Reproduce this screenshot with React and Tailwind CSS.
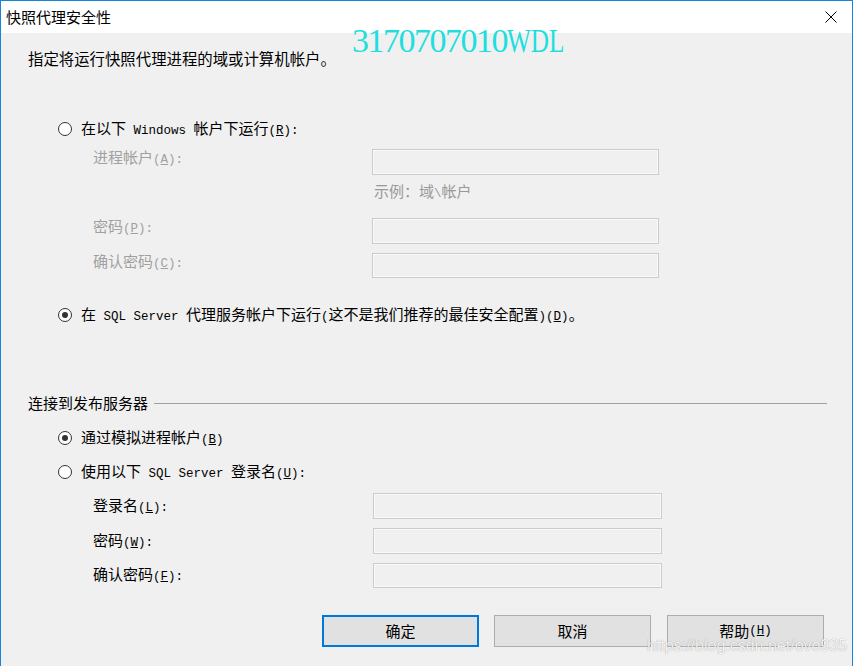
import React from 'react';

const M = ({ children }) => (
  <span className="font-['Liberation_Mono',monospace] text-[12.5px]">{children}</span>
);

function Radio({ checked }) {
  return (
    <span className="flex h-[14px] w-[14px] shrink-0 items-center justify-center rounded-full border border-[#333333] bg-white">
      {checked && <span className="h-[6px] w-[6px] rounded-full bg-[#333333]" />}
    </span>
  );
}

function RadioRow({ checked, className = '', children }) {
  return (
    <div className={`flex h-[24px] items-center ${className}`}>
      <div className="ml-[57px]">
        <Radio checked={checked} />
      </div>
      <span className="ml-[9px] whitespace-nowrap leading-[20px]">{children}</span>
    </div>
  );
}

const inputBox = 'border border-[#cccccc] bg-[#f0f0f0] shadow-[inset_0_0_0_1px_#f9f9f9]';

function DisabledField({ label, className = '', height = 'h-[26px]' }) {
  return (
    <div className={`flex ${height} items-start ${className}`}>
      <span className="ml-[92px] w-[279px] whitespace-nowrap leading-[16px] text-[#a0a0a0]">{label}</span>
      <div className={`h-full w-[287px] ${inputBox}`} />
    </div>
  );
}

function LoginField({ label, height = 'h-[26px]' }) {
  return (
    <div className={`mt-[9px] flex ${height} items-center`}>
      <span className="ml-[92px] w-[280px] whitespace-nowrap leading-[20px]">{label}</span>
      <div className={`h-full w-[289px] ${inputBox}`} />
    </div>
  );
}

export default function App() {
  return (
    <div className="relative h-[666px] w-[853px] overflow-hidden border-x border-t border-[#1883d7] bg-[#f0f0f0] font-['Noto_Sans_CJK_SC',sans-serif] text-[15px] text-black">
      {/* title bar */}
      <div className="flex h-[32px] items-center justify-between bg-white">
        <span className="ml-[5px] leading-[20px]">快照代理安全性</span>
        <svg className="mr-[15px] h-[12px] w-[12px]" viewBox="0 0 12 12" fill="none" stroke="#000" strokeWidth="1">
          <path d="M0.5 0.5 L11.5 11.5 M11.5 0.5 L0.5 11.5" />
        </svg>
      </div>

      <div className="mt-[13px] flex h-[24px] items-center pl-[27px] text-[15.4px] leading-[20px]">
        指定将运行快照代理进程的域或计算机帐户。
      </div>

      <RadioRow className="mt-[47px]">
        在以下<M> Windows </M>帐户下运行<M>(<u>R</u>):</M>
      </RadioRow>

      <DisabledField className="mt-[8px]" label={<>进程帐户<M>(<u>A</u>):</M></>} />

      <div className="ml-[373px] mt-[8px] h-[16px] whitespace-nowrap leading-[16px] text-[#999999]">
        示例：域<M>\</M>帐户
      </div>

      <DisabledField className="mt-[19px]" label={<>密码<M>(<u>P</u>):</M></>} />
      <DisabledField className="mt-[9px]" height="h-[25px]" label={<>确认密码<M>(<u>C</u>):</M></>} />

      <RadioRow checked className="mt-[25px]">
        在<M> SQL Server </M>代理服务帐户下运行<M>(</M>这不是我们推荐的最佳安全配置<M>)(<u>D</u>)</M>。
      </RadioRow>

      <div className="mt-[64px] flex h-[24px] items-center pl-[27px]">
        <span className="whitespace-nowrap leading-[20px]">连接到发布服务器</span>
        <div className="ml-[6px] mr-[25px] h-px flex-1 bg-[#a0a0a0]" />
      </div>

      <RadioRow checked className="mt-[11px]">
        通过模拟进程帐户<M>(<u>B</u>)</M>
      </RadioRow>
      <RadioRow className="mt-[10px]">
        使用以下<M> SQL Server </M>登录名<M>(<u>U</u>):</M>
      </RadioRow>

      <LoginField label={<>登录名<M>(<u>L</u>):</M></>} />
      <LoginField label={<>密码<M>(<u>W</u>):</M></>} />
      <LoginField height="h-[25px]" label={<>确认密码<M>(<u>F</u>):</M></>} />

      <div className="mt-[27px] flex h-[32px] pl-[321px]">
        <button className="flex h-full w-[157px] items-center justify-center border-2 border-[#0078d7] bg-[#e1e1e1] leading-[20px]">
          确定
        </button>
        <button className="ml-[15px] flex h-full w-[157px] items-center justify-center border border-[#adadad] bg-[#e1e1e1] leading-[20px]">
          取消
        </button>
        <button className="ml-[16px] flex h-full w-[157px] items-center justify-center border border-[#adadad] bg-[#e1e1e1] leading-[20px]">
          帮助<M>(<u>H</u>)</M>
        </button>
      </div>

      {/* watermarks laid over the dialog */}
      <div className="pointer-events-none absolute left-[351px] top-[23px] whitespace-nowrap font-['Liberation_Serif',serif] text-[34px] leading-[34px] text-[#1fdede]">
        <span className="tracking-[-1.5px]">3170707010</span>
        <span className="inline-block origin-left scale-x-[0.74]">WDL</span>
      </div>
      <div className="pointer-events-none absolute left-[646px] top-[637px] whitespace-nowrap font-['Liberation_Sans',sans-serif] text-[16px] leading-[16px] text-white/90 [text-shadow:0_0_1px_rgba(0,0,0,0.45)]">
        https://blog.csdn.net/ovo935
      </div>
    </div>
  );
}
